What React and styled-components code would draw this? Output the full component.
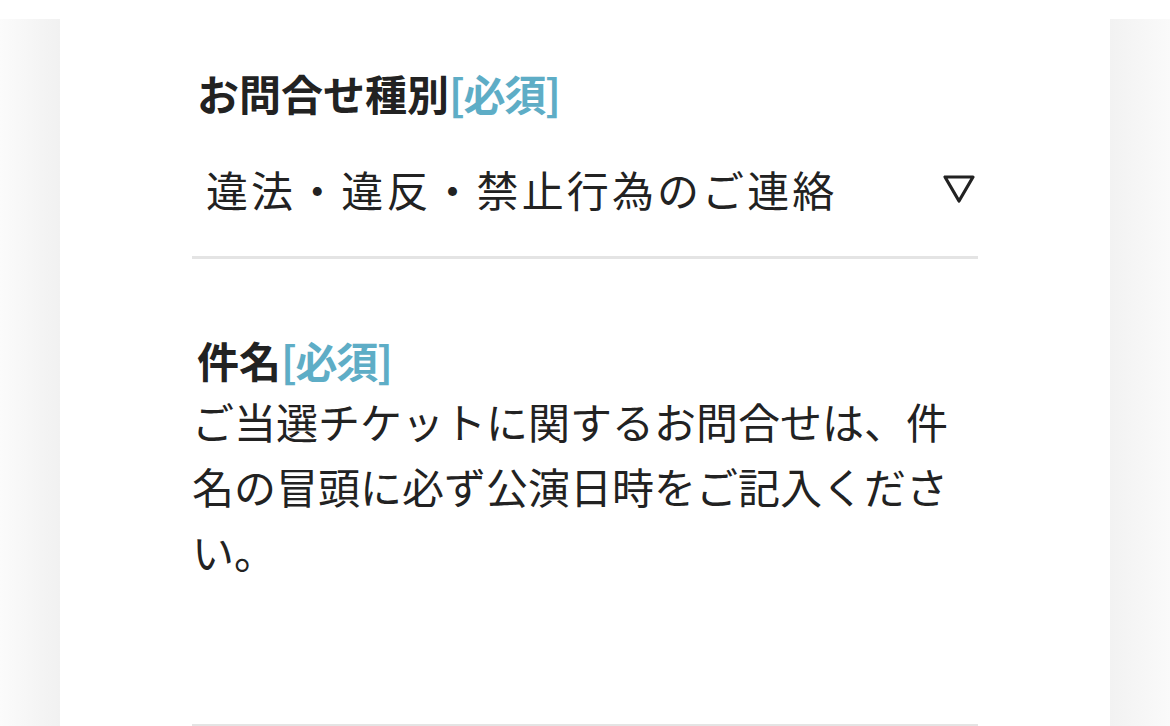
import React from 'react'
import styled, { createGlobalStyle } from 'styled-components'

const GlobalStyle = createGlobalStyle`
body{
    margin: 0;
    background: #ffffff;
    font-family: "Noto Sans CJK JP", "Noto Sans", sans-serif;
    color: #222222;
}
`

const Page = styled.div`
margin-top: 19px;
height: 707px;
overflow: hidden;
display: flex;
justify-content: center;
background: linear-gradient(to right, #fbfbfb 0, #f1f1f1 60px, #ffffff 60px, #ffffff calc(100% - 60px), #f2f2f2 calc(100% - 60px), #fafafa 100%);
`

const Card = styled.form`
width: 1050px;
background: #ffffff;
box-sizing: border-box;
padding: 46px 132px 0 132px;
`

const Field = styled.div`
display: flex;
flex-direction: column;
margin-bottom: ${p => p.gap || 0}px;
`

const Label = styled.label`
font-size: 42px;
line-height: 56px;
font-weight: 700;
padding-left: 5px;
span{
    color: #5eadc6;
    letter-spacing: -1.3px;
}
`

const Select = styled.div`
height: 138px;
box-sizing: border-box;
padding: 0 2px 0 14px;
display: flex;
align-items: center;
justify-content: space-between;
border-bottom: 3px solid #e4e4e4;
font-size: 42px;
letter-spacing: 3.1px;
color: #222222;
`

const Note = styled.p`
margin: 0;
font-size: 42px;
line-height: 65px;
color: #222222;
`

const Input = styled.div`
height: 141px;
border-bottom: 3px solid #e4e4e4;
`

const Arrow = () => (
  <svg width="34" height="34" viewBox="0 0 34 34">
    <path d="M3 5 L31 5 L17 29 Z" fill="none" stroke="#222" strokeWidth="3.2" strokeLinejoin="round" />
  </svg>
)

const App = () => {
  return <>
    <GlobalStyle />
    <Page>
      <Card>
        <Field gap={73}>
          <Label>お問合せ種別<span>[必須]</span></Label>
          <Select>
            違法・違反・禁止行為のご連絡
            <Arrow />
          </Select>
        </Field>
        <Field>
          <Label>件名<span>[必須]</span></Label>
          <Note>ご当選チケットに関するお問合せは、件名の冒頭に必ず公演日時をご記入ください。</Note>
          <Input />
        </Field>
      </Card>
    </Page>
  </>
}

export default App
